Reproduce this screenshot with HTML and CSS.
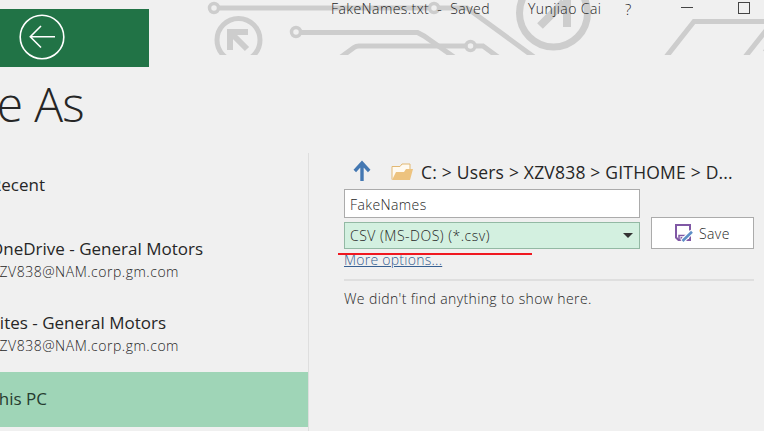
FILE: index.html
```html
<!DOCTYPE html>
<html lang="en">
<head>
<meta charset="utf-8">
<title>Save As</title>
<link rel="stylesheet" href="styles.css">
</head>
<body>
<div class="window">
  <svg class="circuit" viewBox="0 0 764 55" width="764" height="55" fill="none" stroke="#cdcdcd" stroke-width="5" aria-hidden="true">
    <circle cx="214" cy="8" r="4.5" stroke-width="3.5"/>
    <path d="M219 8H430"/>
    <circle cx="238.500" cy="40" r="21.500"/>
    <path d="M230 50V32H248M231 33L247 49" stroke-width="6"/>
    <circle cx="296" cy="32" r="4.500" stroke-width="3.500"/>
    <path d="M301 32.500H417.500L424 36L454 57"/>
    <path d="M341 57L354 47.500Q356 46 359 46H466"/>
    <circle cx="470.500" cy="46" r="4.500" stroke-width="3.500"/>
    <path d="M476 46H483L498 57"/>
    <circle cx="434" cy="8" r="4.500" stroke-width="3.500"/>
    <path d="M439 8H467L534 57"/>
    <circle cx="553.500" cy="13" r="34" stroke-width="7"/>
    <path d="M540 26L564 2M567 -2V27" stroke-width="8"/>
    <path d="M666 57L694 21.500H764M745 57L768 28M765 52L768 48"/>
  </svg>
  <header class="titlebar">
    <div class="back-bar">
      <svg width="46" height="46" viewBox="0 0 46 46" fill="none" stroke="#fff" stroke-width="1.600" role="img" aria-label="Back">
        <circle cx="23" cy="23" r="21.800"/>
        <path d="M36 22.700H11.500M22 12L11.300 22.700L22 33.500"/>
      </svg>
    </div>
    <div class="caption">
      <span class="document">FakeNames.txt&nbsp; -&nbsp; Saved</span>
      <span class="user">Yunjiao Cai</span>
      <span class="help">?</span>
      <span class="minimize"></span>
      <span class="maximize"></span>
    </div>
  </header>
  <h1><span>e As</span></h1>
  <main>
    <nav>
      <div class="place recent"><span class="name">Recent</span></div>
      <div class="place onedrive"><span class="name">OneDrive - General Motors</span><span class="account">ZV838@NAM.corp.gm.com</span></div>
      <div class="place sites"><span class="name">ites - General Motors</span><span class="account">ZV838@NAM.corp.gm.com</span></div>
      <div class="place pc"><span class="name">his PC</span></div>
    </nav>
    <section>
      <div class="path">
        <svg class="up" width="18" height="22" viewBox="0 0 18 22" fill="none" stroke="#4478b2" stroke-width="3.400"><path d="M9 21V3M1.800 11L9 3L16.200 11"/></svg>
        <svg class="folder" width="23" height="18" viewBox="0 0 23 18"><path d="M1 16.500V3.500H9L11 1H19V7" fill="#fffaf0" stroke="#e2b873"/><path d="M1 17L5 9H13L15 6H22L19 17Z" fill="#edc37f"/></svg>
        <span class="crumbs">C: &gt; Users &gt; XZV838 &gt; GITHOME &gt; D...</span>
      </div>
      <div class="form">
        <div class="fields">
          <div class="field"><span class="filename">FakeNames</span></div>
          <div class="field type"><span class="format">CSV (MS-DOS) (*.csv)</span><i class="caret"></i></div>
        </div>
        <div class="save">
          <svg width="18" height="18" viewBox="0 0 18 18" fill="none"><path d="M1 1H15V16H3.500L1 13.500Z" fill="#fff" stroke="#8058a5" stroke-width="2"/><path d="M4 16V11.500H11" stroke="#8058a5" stroke-width="1.500"/><path d="M5.500 13H7.500V16H5.500Z" fill="#8058a5"/><path d="M7 17.500L17 7.500" stroke="#fff" stroke-width="5"/><path d="M7.500 17L17 7.800" stroke="#5d8fc6" stroke-width="2.600"/></svg>
          <span class="save-label">Save</span>
        </div>
      </div>
      <a class="more">More options...</a>
      <p class="empty"><span>We didn't find anything to show here.</span></p>
      <div class="underline"></div>
    </section>
  </main>
</div>
</body>
</html>
```
FILE: styles.css
```css
* { box-sizing: border-box; }
body { margin: 0; overflow: hidden; background: #f0f0f0; color: #262626; font-family: "Open Sans", "Noto Sans", sans-serif; }
.window { position: relative; height: 431px; overflow: hidden; }
.circuit { position: absolute; top: 0; left: 0; }
.titlebar { position: relative; display: flex; height: 67px; }
.back-bar { width: 149px; height: 58px; margin-top: 9px; padding: 5px 0 0 19px; background: #217346; }
.back-bar svg { display: block; }
.caption { display: flex; height: 18px; margin-left: 182px; font-size: 14px; font-weight: 300; letter-spacing: 0.42px; line-height: 18px; white-space: nowrap; }
.document { width: 197px; }
.user { width: 97px; }
.help { width: 56px; font-size: 15px; }
.minimize { width: 12px; height: 1px; margin: 7px 45px 0 0; background: #444; }
.maximize { width: 12px; height: 12px; margin-top: 2px; border: 1px solid #444; }
h1 { display: flex; justify-content: flex-end; width: 84px; height: 86px; margin: 0; padding-top: 10px; font-size: 48px; font-weight: 300; letter-spacing: -0.7px; line-height: 54px; white-space: nowrap; }
main { display: flex; height: 278px; }
nav { width: 309px; border-right: 1px solid #dedede; }
.place { display: flex; flex-direction: column; align-items: flex-end; white-space: nowrap; }
.name { font-size: 17px; line-height: 24px; }
.account { font-size: 14px; font-weight: 300; letter-spacing: 0.52px; line-height: 22px; }
.recent { width: 45px; height: 64px; padding-top: 20px; }
.onedrive { width: 203px; height: 74px; padding-top: 20px; }
.sites { width: 166px; height: 81px; padding-top: 20px; }
.sites .account { margin-right: -13px; }
.onedrive .account { margin-right: 24px; }
.pc { width: 308px; height: 55px; padding: 15px 261px 0 0; background: #9fd5b7; color: #263c30; }
section { position: relative; width: 410px; margin-left: 35px; white-space: nowrap; }
.path { display: flex; height: 36px; }
.up { margin: 7px 20px 0 9px; }
.folder { margin: 10px 7px 0 0; }
.crumbs { padding-top: 7px; font-size: 17.5px; letter-spacing: 0.2px; line-height: 24px; }
.form { display: flex; gap: 11px; height: 60px; font-size: 14px; font-weight: 300; letter-spacing: 0.4px; }
.fields { display: flex; flex-direction: column; gap: 4px; width: 296px; }
.field { display: flex; align-items: center; height: 29px; padding: 2px 5px 0; border: 1px solid #ababab; background: #fff; }
.type { justify-content: space-between; height: 27px; padding: 0 6px 0 5px; border-color: #93b9a4; background: #d3f0e0; letter-spacing: 0.5px; }
.caret { width: 10px; height: 5px; background: #333; clip-path: polygon(0 0, 100% 0, 50% 100%); }
.save { display: flex; align-items: center; gap: 6px; width: 103px; height: 32px; margin-top: 28px; padding-left: 23px; border: 1px solid #ababab; background: #fff; }
.more { display: block; width: max-content; height: 30px; padding-top: 1px; color: #365f91; font-size: 14px; font-weight: 300; letter-spacing: 0.25px; line-height: 20px; text-decoration: underline; }
.empty { margin: 0; padding-top: 7px; border-top: 2px solid #dfdfdf; font-size: 14px; font-weight: 300; letter-spacing: 0.38px; line-height: 22px; }
.underline { position: absolute; top: 100px; left: -6px; width: 194px; height: 2px; background: #f01820; }
```
